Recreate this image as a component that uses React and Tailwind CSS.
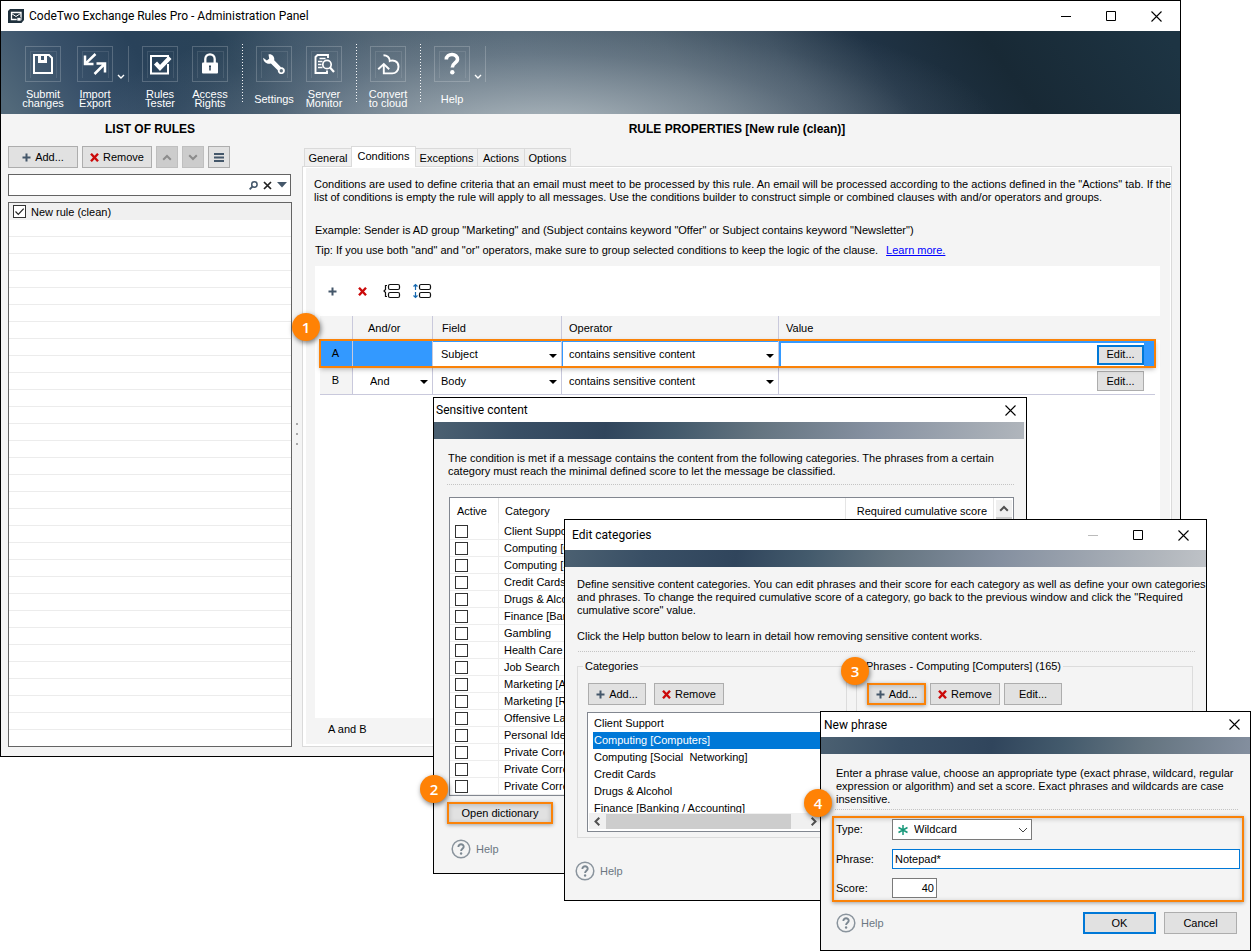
import React from "react";

const sans = "font-['Liberation_Sans',Arial,sans-serif]";
const ui = "font-['Roboto','Open_Sans',sans-serif]";

const strip =
  "h-[17px] bg-[linear-gradient(100deg,#4b6071_0px,#394f65_80px,#30455c_170px,#435a6c_240px,#647480_320px,#8590a0_430px,#b2b7bd_590px,#c6c9cd_660px)]";

/* ---------- icons ---------- */

const Plus = () => (
  <svg width="9" height="9" viewBox="0 0 9 9" aria-hidden="true">
    <path d="M4.5 0.5v8M0.5 4.5h8" stroke="#44576a" strokeWidth="2" />
  </svg>
);

const Cross = () => (
  <svg width="9" height="9" viewBox="0 0 9 9" aria-hidden="true">
    <path d="M1 0.8l7 7.4M8 0.8l-7 7.4" stroke="#cb0a0a" strokeWidth="2.4" />
  </svg>
);

const Caret = ({ color = "#000" }) => (
  <svg width="8" height="4" viewBox="0 0 8 4" aria-hidden="true">
    <path d="M0 0h8L4 4z" fill={color} />
  </svg>
);

const Chevron = ({ className = "" }) => (
  <svg width="10" height="7" viewBox="0 0 10 7" className={className} aria-hidden="true">
    <path d="M1.2 1.2L5 5l3.8-3.8" fill="none" stroke="currentColor" strokeWidth="2" />
  </svg>
);

const Close = () => (
  <svg width="11" height="11" viewBox="0 0 11 11" aria-hidden="true">
    <path d="M0.5 0.5l10 10M10.5 0.5l-10 10" stroke="#000" strokeWidth="1.1" />
  </svg>
);

const Maximize = () => (
  <svg width="10" height="10" viewBox="0 0 10 10" aria-hidden="true">
    <path d="M0.5 0.5h9v9h-9z" fill="none" stroke="#000" />
  </svg>
);

const Minimize = ({ color = "#000" }) => (
  <svg width="10" height="10" viewBox="0 0 10 10" aria-hidden="true">
    <path d="M0 5.5h10" stroke={color} />
  </svg>
);

const toolIcons = {
  save: (
    <>
      <path d="M3 3h15l3 3v15H3z" fill="none" stroke="#fff" strokeWidth="2" />
      <path d="M7 3v8h9V3h-3v5h-3V3z" fill="#fff" />
    </>
  ),
  transfer: (
    <>
      <path d="M12.5 2L3 11.2M2 3.5V12h8.5" fill="none" stroke="#fff" strokeWidth="2.5" />
      <path d="M11.500 22L21 12.500M13.500 11.500H22v9" fill="none" stroke="#fff" strokeWidth="2.500" />
    </>
  ),
  check: (
    <>
      <path d="M20 12v9.500H3V4h17v3" fill="none" stroke="#fff" strokeWidth="2" />
      <path d="M7.500 11l4.500 5L22 5.500" fill="none" stroke="#fff" strokeWidth="4.200" />
    </>
  ),
  lock: (
    <>
      <path d="M7.300 11V7a4.700 4.700 0 0 1 9.400 0v4" fill="none" stroke="#fff" strokeWidth="2.300" />
      <rect x="4" y="10.500" width="16" height="11" rx="1" fill="#fff" />
      <path d="M12 13.500v5M11 14.300h2" stroke="#2b4257" strokeWidth="1.500" />
    </>
  ),
  wrench: (
    <>
      <path
        d="M1.200 5.800L4.800 8.600 7.200 6.800 6.500 2.400C9.800 1.700 13 4.600 12.200 8.300L19 15.200C22 15 23.500 17.500 22.600 20 21.500 22.700 17.500 22.800 16.200 20.200 15.900 19.600 15.800 18.900 15.800 18.300L8.900 11.600C4.800 12.800 1.200 9.800 1.200 5.800z"
        fill="#fff"
      />
      <circle cx="19.300" cy="18.700" r="1.700" fill="#5c6f7d" />
    </>
  ),
  monitor: (
    <g fill="none" stroke="#fff">
      <path d="M16 6V3H5.500L3.500 5v16H15v-2.500" strokeWidth="1.900" />
      <path d="M7.500 6.500h6M6 9.500h4.500M6 12.500h3.500M6 15.500h4.500" strokeWidth="1.300" />
      <circle cx="15" cy="12.500" r="4.200" strokeWidth="1.700" />
      <path d="M18 15.500l4 4.500" strokeWidth="2.200" />
    </g>
  ),
  cloud: (
    <g fill="none" stroke="#fff" strokeWidth="1.900">
      <path d="M7.500 3.200c3.400 0 6.300 2.300 6.300 5.800 3-1.400 8.700 0 8.700 5.800 0 4-2.900 6.600-6.200 6.600H7.800V13" />
      <path d="M2.200 17.200l5.600-5.200 5.400 5.200" />
    </g>
  ),
  help: (
    <>
      <path d="M6.300 7.500C6.300 0.500 18 1 17.500 7.500c-.2 3.500-5.200 3.600-5.200 8" fill="none" stroke="#fff" strokeWidth="3.600" />
      <circle cx="12.300" cy="20.300" r="2.200" fill="#fff" />
    </>
  ),
};

/* ---------- shared controls ---------- */

function ToolButton({ icon, children }) {
  return (
    <button className="flex w-[50px] shrink-0 flex-col items-center gap-2">
      <span className="relative grid size-9 place-items-center border border-white/20">
        <span className="absolute top-1 left-1 right-[3px] bottom-[3px] border border-b-0 border-white/10" />
        <svg width="24" height="24" viewBox="0 0 24 24" aria-hidden="true">
          {toolIcons[icon]}
        </svg>
      </span>
      <span className="flex h-[18px] w-full items-center justify-center text-center leading-[9px]">{children}</span>
    </button>
  );
}

const DropCaret = ({ label }) => (
  <button aria-label={label} className="-ml-[7px] grid h-9 w-4 shrink-0 place-items-end justify-center border-r border-white/20 pb-[3px]">
    <svg width="8" height="5" viewBox="0 0 8 5" aria-hidden="true">
      <path d="M1 1l3 3 3-3" fill="none" stroke="#fff" strokeWidth="1.400" />
    </svg>
  </button>
);

const Separator = () => (
  <span className="-mt-[2px] flex h-[60px] w-[14px] shrink-0 justify-center">
    <span className="h-full w-px bg-[repeating-linear-gradient(180deg,rgba(255,255,255,0.95)_0_1px,transparent_1px_3px)]" />
  </span>
);

function Btn({ className = "w-[70px]", frame = "border border-[#adadad]", icon, label, children }) {
  return (
    <button aria-label={label} className={`flex h-[22px] shrink-0 items-center justify-center gap-1 bg-[#e1e1e1] ${frame} ${className}`}>
      {icon}
      {children}
    </button>
  );
}

const orangeFrame = "border-2 border-[#fa8208] shadow-[0_1px_4px_rgba(0,0,0,0.35),inset_0_1px_5px_rgba(0,0,0,0.2)]";

const Dotted = ({ className = "" }) => (
  <div className={`h-px bg-[repeating-linear-gradient(90deg,#c4c4c4_0_1px,transparent_1px_2px)] ${className}`} />
);

const HelpLink = ({ className = "" }) => (
  <button className={`flex items-center gap-[5px] text-[#6b7782] ${className}`}>
    <svg width="20" height="20" viewBox="0 0 20 20" aria-hidden="true">
      <circle cx="10" cy="10" r="8.800" fill="none" stroke="#8a949d" strokeWidth="1.500" />
      <path d="M7.400 8C7.200 4.300 13 4.500 12.700 7.900c-.2 1.900-2.600 2-2.600 4.100" fill="none" stroke="#7b8791" strokeWidth="1.900" />
      <circle cx="10.100" cy="14.500" r="1.200" fill="#7b8791" />
    </svg>
    Help
  </button>
);

const Badge = ({ className, children }) => (
  <span
    className={`absolute z-30 grid size-7 place-items-center rounded-full bg-[#ff8205] font-['Open_Sans','Noto_Sans',sans-serif] text-[15px] font-semibold text-white shadow-[1px_2px_5px_rgba(0,0,0,0.5)] ${className}`}
  >
    {children}
  </span>
);

function Dialog({ title, className, bar, controls, children }) {
  return (
    <section role="dialog" aria-label={title} className={`absolute flex flex-col border border-black bg-[#f4f4f4] ${className}`}>
      <header className={`flex shrink-0 items-center justify-between bg-white text-xs ${ui} ${bar}`}>
        <h2>{title}</h2>
        {controls || (
          <button aria-label="Close">
            <Close />
          </button>
        )}
      </header>
      {children}
    </section>
  );
}

const GridSelect = ({ label, value, className = "pl-2" }) => (
  <span className="relative flex h-full items-center bg-white">
    <select aria-label={label} defaultValue={value} className={`h-full w-full appearance-none ${className}`}>
      <option>{value}</option>
    </select>
    <span className="pointer-events-none absolute top-3 right-1 flex">
      <Caret />
    </span>
  </span>
);

/* ---------- main window ---------- */

function Toolbar() {
  return (
    <nav className="flex h-[83px] items-start overflow-hidden bg-[radial-gradient(ellipse_460px_135px_at_46%_125%,rgba(185,195,200,0.95),rgba(175,185,192,0.65)_30%,rgba(165,175,185,0.3)_60%,rgba(160,170,180,0.1)_82%,transparent),linear-gradient(55deg,#52697a_10px,#39516a_80px,#29425a_147px,#2a4358_220px,#3d5468_285px,#4a5e6e_352px,#4c6070_467px,#475a69_580px,#394c5d_670px,#203345_750px,#182935_850px,#1d3443_1000px)] pt-[15px] pl-[17px] text-white">
      <ToolButton icon="save">Submit changes</ToolButton>
      <div className="ml-[2px] flex">
        <ToolButton icon="transfer">Import<br />Export</ToolButton>
        <DropCaret label="Import and export options" />
      </div>
      <div className="ml-[6px] flex">
        <ToolButton icon="check">Rules Tester</ToolButton>
        <ToolButton icon="lock">Access Rights</ToolButton>
      </div>
      <Separator />
      <ToolButton icon="wrench">Settings</ToolButton>
      <ToolButton icon="monitor">Server Monitor</ToolButton>
      <Separator />
      <ToolButton icon="cloud">Convert to cloud</ToolButton>
      <Separator />
      <ToolButton icon="help">Help</ToolButton>
      <DropCaret label="Help options" />
    </nav>
  );
}

function RuleList() {
  return (
    <aside className="flex w-[284px] shrink-0 flex-col">
      <h2 className="h-[32px] pt-[7px] text-center text-xs font-bold leading-4">LIST OF RULES</h2>
      <div className="flex gap-1">
        <Btn icon={<Plus />}>Add...</Btn>
        <Btn icon={<Cross />}>Remove</Btn>
        <button aria-label="Move up" className="grid h-[22px] w-[22px] place-items-center border border-[#bfbfbf] bg-[#cccccc] text-[#8c8c8c]">
          <Chevron className="rotate-180" />
        </button>
        <button aria-label="Move down" className="grid h-[22px] w-[22px] place-items-center border border-[#bfbfbf] bg-[#cccccc] text-[#8c8c8c]">
          <Chevron />
        </button>
        <Btn className="w-[22px]" label="List menu" icon={
          <svg width="10" height="9" viewBox="0 0 10 9" aria-hidden="true">
            <path d="M0 1h10M0 4.500h10M0 8h10" stroke="#44576a" strokeWidth="2" />
          </svg>
        } />
      </div>
      <div className="mt-[6px] mr-px flex h-[22px] items-center gap-[5px] border border-[#646464] bg-white pr-[3px]">
        <input aria-label="Search rules" className="min-w-0 grow px-1 outline-none" />
        <button aria-label="Search">
          <svg width="9" height="9" viewBox="0 0 9 9" aria-hidden="true">
            <circle cx="5.400" cy="3.500" r="2.700" fill="none" stroke="#44576a" strokeWidth="1.500" />
            <path d="M3.600 5.400L0.600 8.400" stroke="#44576a" strokeWidth="1.900" />
          </svg>
        </button>
        <button aria-label="Clear search">
          <svg width="9" height="9" viewBox="0 0 9 9" aria-hidden="true">
            <path d="M1 1l7 7M8 1L1 8" stroke="#222" strokeWidth="1.700" />
          </svg>
        </button>
        <button aria-label="Search options">
          <svg width="10" height="6" viewBox="0 0 10 6" aria-hidden="true">
            <path d="M0 0h10L5 5.500z" fill="#44576a" />
          </svg>
        </button>
      </div>
      <ul className="mt-[6px] h-[545px] overflow-hidden border border-[#646464] bg-white">
        <li className="h-[17px] bg-[#f0f0f0]">
          <label className="flex h-full items-center gap-[5px] pl-1">
            <span className="relative size-[13px]">
              <input type="checkbox" defaultChecked className="block size-[13px] appearance-none border border-[#333] bg-white" />
              <svg width="13" height="13" viewBox="0 0 13 13" className="pointer-events-none absolute inset-0" aria-hidden="true">
                <path d="M2.500 6.500L5.300 9.300l5.400-5.600" fill="none" stroke="#222" strokeWidth="1.200" />
              </svg>
            </span>
            <span className="pt-px">New rule (clean)</span>
          </label>
        </li>
        {Array.from({ length: 30 }, (_, i) => (
          <li key={i} className="h-[17px] border-b border-[#ececec]" />
        ))}
      </ul>
    </aside>
  );
}

const tabs = [
  ["General", "w-[47px]"],
  ["Conditions", "w-[65px]"],
  ["Exceptions", "w-[62px]"],
  ["Actions", "w-[47px]"],
  ["Options", "w-[46px]"],
];

function ConditionTable() {
  const cell = "border-r border-[#c9c9dc] p-0";
  const bottom = "border-b border-[#c9c9dc]";
  return (
    <table className="w-full table-fixed border-separate border-spacing-0">
      <colgroup>
        <col className="w-[33px]" />
        <col className="w-[80px]" />
        <col className="w-[129px]" />
        <col className="w-[217px]" />
        <col />
      </colgroup>
      <thead>
        <tr className="h-6 bg-[#f4f4f4] text-left">
          <th className={cell} aria-label="Row" />
          <th className={`${cell} pt-px pl-[15px] font-normal`}>And/or</th>
          <th className={`${cell} pt-px pl-[9px] font-normal`}>Field</th>
          <th className={`${cell} pt-px pl-[7px] font-normal`}>Operator</th>
          <th className="bg-[#f4f4f4] p-0 pt-px pl-[7px] font-normal shadow-[5px_0_0_#f4f4f4]">Value</th>
        </tr>
      </thead>
      <tbody>
        <tr className="relative z-10 h-[27px] bg-[#3399ff] shadow-[0_2px_5px_rgba(0,0,0,0.3)] outline-2 -outline-offset-1 outline-[#fa8208]">
          <td className={`${cell} pr-px text-center`}>A</td>
          <td className={cell} />
          <td className={cell}>
            <div className="h-[27px] pt-[2px] pb-px">
              <GridSelect label="Field A" value="Subject" />
            </div>
          </td>
          <td className={cell}>
            <div className="h-[27px] pt-[2px] pb-px pl-px">
              <GridSelect label="Operator A" value="contains sensitive content" className="pl-[6px]" />
            </div>
          </td>
          <td className="p-0">
            <div className="h-[27px] pt-[3px] pr-[11px] pb-px pl-[2px]">
              <div className="flex h-full items-center justify-end bg-white">
                <Btn className="w-[47px] max-h-5" frame="border-2 border-[#0078d7]">Edit...</Btn>
              </div>
            </div>
          </td>
        </tr>
        <tr className="h-[28px] bg-white">
          <td className={`${cell} ${bottom} bg-[#f4f4f4] pr-px text-center`}>B</td>
          <td className={`${cell} ${bottom}`}>
            <div className="h-[27px] pt-px"><GridSelect label="And/or B" value="And" className="pl-[17px]" /></div>
          </td>
          <td className={`${cell} ${bottom}`}>
            <div className="h-[27px] pt-px"><GridSelect label="Field B" value="Body" /></div>
          </td>
          <td className={`${cell} ${bottom}`}>
            <div className="h-[27px] pt-px"><GridSelect label="Operator B" value="contains sensitive content" className="pl-[7px]" /></div>
          </td>
          <td className={`${bottom} p-0`}>
            <div className="flex h-[27px] items-center justify-end pt-px pr-[11px]">
              <Btn className="w-[47px] max-h-5">Edit...</Btn>
            </div>
          </td>
        </tr>
      </tbody>
    </table>
  );
}

function RuleProperties() {
  return (
    <main className="flex min-w-0 grow flex-col">
      <h2 className="h-[32px] pt-[7px] text-center text-xs font-bold leading-4">RULE PROPERTIES [New rule (clean)]</h2>
      <div role="tablist" className="relative z-10 -mb-px flex h-[21px] items-end pl-[2px]">
        {tabs.map(([name, width], i) => (
          <button
            key={name}
            role="tab"
            aria-selected={i === 1}
            className={
              i === 1
                ? `h-[21px] border border-b-0 border-[#dadada] bg-white pb-px ${width}`
                : `mb-px h-[18px] border border-b-0 border-[#dadada] bg-[#f0f0f0] pt-px ${i > 1 ? "border-l-0" : "border-r-0"} ${width}`
            }
          >
            {name}
          </button>
        ))}
      </div>
      <div className="flex grow flex-col border border-[#dadada] bg-white pt-px pr-px pb-[2px] pl-[3px]">
        <div className="flex grow flex-col bg-[#f4f4f4] pr-[10px] pl-2">
          <p className="pt-[10px] leading-[13px] whitespace-nowrap">
            Conditions are used to define criteria that an email must meet to be processed by this rule. An email will be processed according to the actions defined in the "Actions" tab. If the<br />
            list of conditions is empty the rule will apply to all messages. Use the conditions builder to construct simple or combined clauses with and/or operators and groups.
          </p>
          <p className="mt-[20px] pl-px leading-[13px]">
            Example: Sender is AD group "Marketing" and (Subject contains keyword "Offer" or Subject contains keyword "Newsletter")
          </p>
          <p className="mt-[7px] pl-px leading-[13px]">
            Tip: If you use both "and" and "or" operators, make sure to group selected conditions to keep the logic of the clause.
            <a href="#learn" className="ml-2 text-[#0000ff] underline">Learn more.</a>
          </p>
          <div className="ml-px mt-[9px] grow bg-white">
            <div className="flex h-[50px] items-center pl-3">
              <button aria-label="Add condition" className="grid w-[10px] place-items-center"><Plus /></button>
              <button aria-label="Delete condition" className="ml-5 grid w-[10px] place-items-center"><Cross /></button>
              <button aria-label="Group conditions" className="ml-4">
                <svg width="18" height="16" viewBox="0 0 18 16" fill="none" stroke="#111" strokeWidth="1.200" aria-hidden="true">
                  <rect x="5.500" y="1.500" width="11" height="5" rx="1.500" />
                  <rect x="5.500" y="9.500" width="11" height="5" rx="1.500" />
                  <path d="M4 2.500H2.500v4L1 8l1.500 1.500v4H4" />
                </svg>
              </button>
              <button aria-label="Ungroup conditions" className="ml-3">
                <svg width="19" height="16" viewBox="0 0 19 16" fill="none" stroke="#111" strokeWidth="1.200" aria-hidden="true">
                  <rect x="6.500" y="1.500" width="11" height="5" rx="1.500" />
                  <rect x="6.500" y="9.500" width="11" height="5" rx="1.500" />
                  <path d="M2.500 7V2M0.500 3.500l2-2 2 2M2.500 9v5M0.500 12.500l2 2 2-2" stroke="#1468b0" />
                </svg>
              </button>
            </div>
            <div className="pr-[5px] pl-[5px]">
              <ConditionTable />
            </div>
          </div>
          <p className="flex h-[26px] items-center pb-1 pl-[14px]">A and B</p>
        </div>
      </div>
    </main>
  );
}

/* ---------- dialogs ---------- */

const categories = [
  "Client Support", "Computing [Computers]", "Computing [Social  Networking]", "Credit Cards", "Drugs & Alcohol",
  "Finance [Banking / Accounting]", "Gambling", "Health Care", "Job Search", "Marketing [Advertising]",
  "Marketing [Research]", "Offensive Language", "Personal Identity", "Private Correspondence",
  "Private Correspondence 2", "Private Correspondence 3",
];

function SensitiveContent() {
  return (
    <Dialog title="Sensitive content" className="top-[397px] left-[433px] h-[477px] w-[594px]" bar="h-6 pl-[2px] pr-[10px]">
      <div className={`mr-[2px] shrink-0 ${strip}`} />
      <p className="mt-[13px] ml-[14px] whitespace-nowrap leading-[13px]">
        The condition is met if a message contains the content from the following categories. The phrases from a certain<br />
        category must reach the minimal defined score to let the message be classified.
      </p>
      <Dotted className="mt-[6px] mr-3 ml-[13px]" />
      <div className="mt-[12px] mr-3 ml-[15px] flex h-[299px] shrink-0 border border-[#828790] bg-white">
        <table className="w-full table-fixed border-separate border-spacing-0">
          <thead>
            <tr className="h-[25px] text-left">
              <th className="w-[49px] border-r border-[#e5e5e5] p-0 pt-px pl-[7px] font-normal">Active</th>
              <th className="border-r border-[#e5e5e5] p-0 pt-px pl-[6px] font-normal">Category</th>
              <th className="w-[148px] border-r border-[#e5e5e5] p-0 pt-px pr-[6px] text-right font-normal">Required cumulative score</th>
            </tr>
          </thead>
          <tbody>
            {categories.map((name) => (
              <tr key={name} className="h-[17px]">
                <td className="border-r border-b border-[#ededed] p-0 pl-[5px]">
                  <input type="checkbox" aria-label={name} className="block size-[13px] appearance-none border border-[#333] bg-white" />
                </td>
                <td className="border-b border-[#ededed] p-0 pt-px pl-[5px] leading-[15px]">{name}</td>
                <td className="border-b border-[#ededed] p-0" />
              </tr>
            ))}
          </tbody>
        </table>
        <div className="mt-[2px] mr-px ml-[2px] flex w-4 shrink-0 flex-col bg-[#f0f0f0] text-[#505050]">
          <button aria-label="Scroll up" className="grid h-[17px] place-items-center"><Chevron className="rotate-180" /></button>
          <div className="h-20 bg-[#cdcdcd]" />
        </div>
      </div>
      <Btn className="mt-[6px] ml-[13px] w-[106px]" frame={orangeFrame}>Open dictionary</Btn>
      <HelpLink className="mt-[15px] ml-[17px] self-start" />
    </Dialog>
  );
}

function EditCategories() {
  return (
    <Dialog
      title="Edit categories"
      className="top-[519px] left-[564px] h-[382px] w-[643px]"
      bar="h-[30px] pl-[7px] pr-[17px]"
      controls={
        <div className="flex items-center gap-[35px]">
          <button aria-label="Minimize" disabled><Minimize color="#bbb" /></button>
          <button aria-label="Maximize"><Maximize /></button>
          <button aria-label="Close"><Close /></button>
        </div>
      }
    >
      <div className={`shrink-0 ${strip}`} />
      <p className="mt-[11px] ml-3 whitespace-nowrap leading-[13px]">
        Define sensitive content categories. You can edit phrases and their score for each category as well as define your own categories<br />
        and phrases. To change the required cumulative score of a category, go back to the previous window and click the "Required<br />
        cumulative score" value.
      </p>
      <p className="mt-[13px] ml-3 leading-[13px]">Click the Help button below to learn in detail how removing sensitive content works.</p>
      <Dotted className="mt-2 mr-[10px] ml-[13px]" />
      <div className="mt-2 flex gap-[9px] pr-[13px] pl-3">
        <fieldset className="h-[178px] w-[270px] shrink-0 border border-[#dcdcdc] pl-[10px]">
          <legend className="-ml-[5px] px-[2px] leading-[13px]">Categories</legend>
          <div className="mt-[10px] flex gap-2">
            <Btn className="w-[58px]" icon={<Plus />}>Add...</Btn>
            <Btn icon={<Cross />}>Remove</Btn>
          </div>
          <div className="mt-[7px] h-[120px] w-[238px] -ml-px border border-[#828790] bg-white pt-[2px] pl-[5px]">
            <ul className="-mr-px h-[98px] overflow-hidden whitespace-pre leading-[17px]">
              {categories.slice(0, 6).map((name, i) => (
                <li key={name} className={i === 1 ? "bg-[#0078d7] pl-px text-white" : "pl-px"}>{name}</li>
              ))}
            </ul>
            <div className="-ml-1 flex h-4 items-center bg-[#f0f0f0] pr-[5px] pl-[3px] text-[#505050]">
              <button aria-label="Scroll left"><Chevron className="rotate-90" /></button>
              <span className="ml-[4px] h-[15px] w-[185px] bg-[#cdcdcd]" />
              <button aria-label="Scroll right" className="ml-auto"><Chevron className="-rotate-90" /></button>
            </div>
          </div>
        </fieldset>
        <fieldset className="h-[178px] min-w-0 grow border border-[#dcdcdc] pl-[10px]">
          <legend className="-ml-[3px] px-[2px] leading-[13px]">Phrases - Computing [Computers] (165)</legend>
          <div className="mt-[10px] flex gap-1">
            <Btn className="w-[59px]" frame={orangeFrame} icon={<Plus />}>Add...</Btn>
            <Btn icon={<Cross />}>Remove</Btn>
            <Btn className="w-[58px]">Edit...</Btn>
          </div>
        </fieldset>
      </div>
      <HelpLink className="mt-[23px] ml-[10px] self-start" />
    </Dialog>
  );
}

function NewPhrase() {
  return (
    <Dialog title="New phrase" className="top-[711px] left-[820px] h-[240px] w-[431px]" bar="h-[25px] pl-[3px] pr-[10px]">
      <div className={`shrink-0 ${strip}`} />
      <p className="mt-[13px] ml-[15px] whitespace-nowrap leading-[13px]">
        Enter a phrase value, choose an appropriate type (exact phrase, wildcard, regular<br />
        expression or algorithm) and set a score. Exact phrases and wildcards are case<br />
        insensitive.
      </p>
      <Dotted className="mt-[3px] mr-3 ml-[14px]" />
      <div className={`mt-[6px] mr-[6px] ml-[11px] grid grid-cols-[56px_1fr] items-center gap-y-[9px] px-[2px] pt-px pb-[2px] ${orangeFrame}`}>
        <label htmlFor="type">Type:</label>
        <span className="relative w-[140px]">
          <select id="type" defaultValue="Wildcard" className="block h-[21px] w-full appearance-none border border-[#7a7a7a] bg-white pl-[21px]">
            <option>Wildcard</option>
          </select>
          <svg width="10" height="10" viewBox="0 0 10 10" className="pointer-events-none absolute top-[6px] left-[6px]" aria-hidden="true">
            <path d="M5 0v10M0.500 2.500l9 5M9.500 2.500l-9 5" stroke="#17987a" strokeWidth="1.500" />
          </svg>
          <svg width="10" height="6" viewBox="0 0 10 6" className="pointer-events-none absolute top-2 right-[4px]" aria-hidden="true">
            <path d="M1 1l4 4 4-4" fill="none" stroke="#444" />
          </svg>
        </span>
        <label htmlFor="phrase">Phrase:</label>
        <input id="phrase" defaultValue="Notepad*" className="h-5 w-full border border-[#0078d7] bg-white px-[2px] outline-none" />
        <label htmlFor="score">Score:</label>
        <input id="score" defaultValue="40" className="h-5 w-[45px] border border-[#7a7a7a] bg-white px-[2px] text-right outline-none" />
      </div>
      <div className="mt-[10px] flex items-center pr-[13px] pl-[15px]">
        <HelpLink />
        <div className="ml-auto flex gap-2">
          <Btn className="w-[73px]" frame="border-2 border-[#0078d7]">OK</Btn>
          <Btn className="w-[73px]">Cancel</Btn>
        </div>
      </div>
    </Dialog>
  );
}

export default function App() {
  return (
    <div className={`relative min-h-screen overflow-hidden bg-white text-[11px] leading-[13px] text-black ${sans}`}>
      <div className="mr-[70px] border border-black bg-[#f4f4f4]">
        <header className={`flex h-[30px] items-center bg-white pr-[18px] pl-[7px] text-xs ${ui}`}>
          <svg width="16" height="14" viewBox="0 0 16 14" aria-hidden="true">
            <path d="M2 0h14v11l-2.500 3H0V2z" fill="#1f303c" />
            <path d="M3.500 3.500h9.500v7H3.500z" fill="none" stroke="#fff" strokeWidth="1.300" />
            <path d="M3.500 4.500L8 7.500l4.500-3" fill="none" stroke="#fff" />
            <path d="M9 8.500h4V12H9z" fill="#fff" stroke="#1f303c" strokeWidth=".6" />
          </svg>
          <h1 className="ml-[5px]">CodeTwo Exchange Rules Pro - Administration Panel</h1>
          <div className="ml-auto flex items-center gap-[35px]">
            <button aria-label="Minimize"><Minimize /></button>
            <button aria-label="Maximize"><Maximize /></button>
            <button aria-label="Close"><Close /></button>
          </div>
        </header>
        <Toolbar />
        <div className="flex pr-2 pb-[9px] pl-[7px]">
          <RuleList />
          <div className="flex w-[10px] shrink-0 flex-col items-center justify-center gap-2 pt-[7px]">
            <span className="size-[2px] bg-[#a8a8a8]" />
            <span className="size-[2px] bg-[#a8a8a8]" />
            <span className="size-[2px] bg-[#a8a8a8]" />
          </div>
          <RuleProperties />
        </div>
      </div>

      <SensitiveContent />
      <EditCategories />
      <NewPhrase />

      <Badge className="top-[313px] left-[292px]">1</Badge>
      <Badge className="top-[775px] left-[420px]">2</Badge>
      <Badge className="top-[657px] left-[841px]">3</Badge>
      <Badge className="top-[789px] left-[804px]">4</Badge>
    </div>
  );
}
